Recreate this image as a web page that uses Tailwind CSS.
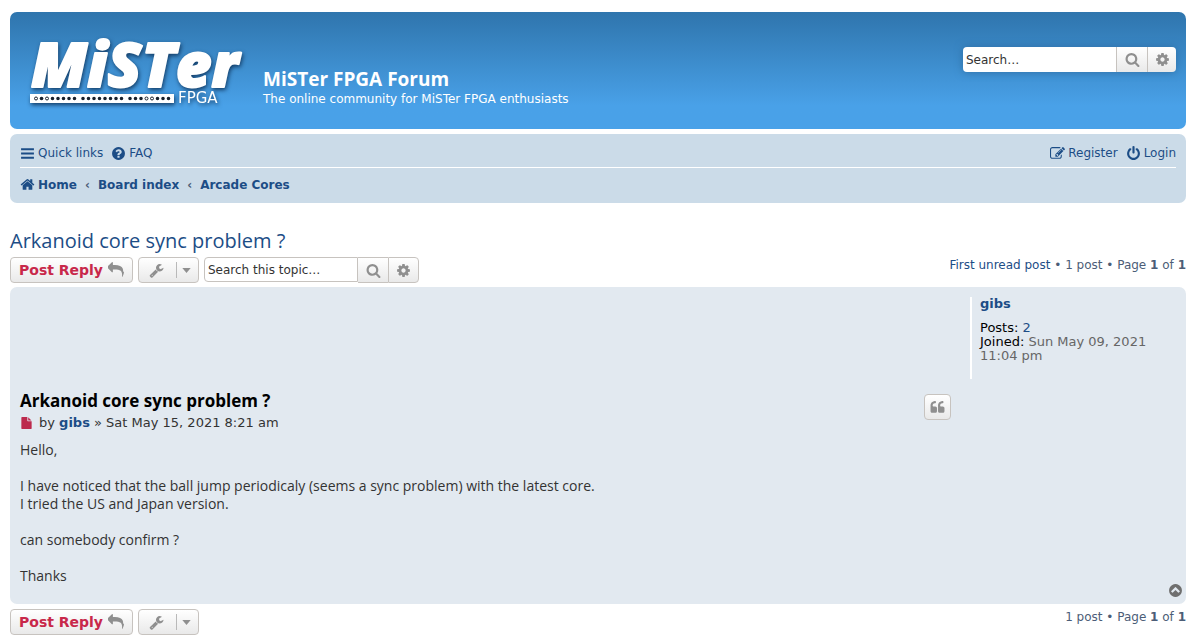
<!DOCTYPE html>
<html lang="en">
	<head>
		<meta charset="UTF-8" />
		<meta name="viewport" content="width=device-width, initial-scale=1.0" />
		<title>Arkanoid core sync problem ? - MiSTer FPGA Forum</title>
		<script src="https://cdn.jsdelivr.net/npm/@tailwindcss/browser@4"></script>
	</head>
	<body class="bg-white pt-3 pl-[10px] pr-[14px] pb-1 font-['Verdana','DejaVu_Sans',sans-serif] text-[12px] leading-4 text-[#4c5d77]">
		<!-- icon set -->
		<svg class="hidden" xmlns="http://www.w3.org/2000/svg">
			<symbol id="i-search" viewBox="0 0 1792 1792"><path d="M1216 832q0-185-131.5-316.5t-316.5-131.5-316.5 131.5-131.5 316.5 131.5 316.5 316.5 131.5 316.5-131.5 131.5-316.5zm512 832q0 52-38 90t-90 38q-54 0-90-38l-343-342q-179 124-399 124-143 0-273.5-55.5t-225-150-150-225-55.5-273.5 55.5-273.5 150-225 225-150 273.5-55.5 273.5 55.5 225 150 150 225 55.5 273.5q0 220-124 399l343 343q37 37 37 90z" /></symbol>
			<symbol id="i-cog" viewBox="0 0 1792 1792"><path d="M1152 896q0-106-75-181t-181-75-181 75-75 181 75 181 181 75 181-75 75-181zm512-109v222q0 12-8 23t-20 13l-185 28q-19 54-39 91 35 50 107 138 10 12 10 25t-9 23q-27 37-99 108t-94 71q-12 0-26-9l-138-108q-44 23-91 38-16 136-29 186-7 28-36 28h-222q-14 0-24.5-8.5t-11.5-21.5l-28-184q-49-16-90-37l-141 107q-10 9-25 9-14 0-25-11-126-114-165-168-7-10-7-23 0-12 8-23 15-21 51-66.5t54-70.5q-27-50-41-99l-183-27q-13-2-21-12.5t-8-23.5v-222q0-12 8-23t19-13l186-28q14-46 39-92-40-57-107-138-10-12-10-24 0-10 9-23 26-36 98.5-107.5t94.5-71.5q13 0 26 10l138 107q44-23 91-38 16-136 29-186 7-28 36-28h222q14 0 24.5 8.5t11.5 21.5l28 184q49 16 90 37l142-107q9-9 24-9 13 0 25 10 129 119 165 170 7 8 7 22 0 12-8 23-15 21-51 66.5t-54 70.5q26 50 41 98l183 28q13 2 21 12.5t8 23.5z" /></symbol>
			<symbol id="i-bars" viewBox="0 0 1792 1792"><path d="M128 256h1536v256H128zM128 768h1536v256H128zM128 1280h1536v256H128z" /></symbol>
			<symbol id="i-reply" viewBox="0 0 1792 1792"><path d="M1792 1120q0 166-127 451-3 7-10.5 24t-13.5 30-13 22q-12 17-28 17-15 0-23.5-10t-8.5-25q0-9 2.5-26.5t2.5-23.5q5-68 5-123 0-112-19.5-200.5t-54-153.5-89-112-120-78.5-149.5-47.5-175-23.5-199.5-6.5h-224v256q0 26-19 45t-45 19-45-19l-512-512q-19-19-19-45t19-45l512-512q19-19 45-19t45 19 19 45v256h224q713 0 875 403 53 134 53 333z" /></symbol>
			<symbol id="i-wrench" viewBox="0 0 1792 1792"><path d="M448 1472q0-26-19-45t-45-19-45 19-19 45 19 45 45 19 45-19 19-45zm644-420l-682 682q-37 37-90 37-52 0-91-37l-106-108q-38-36-38-90 0-53 38-91l681-681q39 98 114.5 173.5t173.5 114.5zm634-435q0 39-23 106-47 134-164.5 217.5t-258.5 83.5q-185 0-316.5-131.5t-131.5-316.5 131.5-316.5 316.5-131.5q58 0 121.5 16.5t107.5 46.5q16 11 16 28t-16 28l-293 169v224l193 107q5-3 79-48.5t135.5-81 70.5-35.5q15 0 23.5 10t8.5 25z" /></symbol>
			<symbol id="i-home" viewBox="0 0 1792 1792"><path d="M1472 992v480q0 26-19 45t-45 19h-384v-384h-256v384h-384q-26 0-45-19t-19-45v-480q0-1 .5-3t.5-3l575-474 575 474q1 2 1 6zm223-69l-62 74q-8 9-21 11h-3q-13 0-21-7l-692-577-692 577q-12 8-24 7-13-2-21-11l-62-74q-8-10-7-23.5t11-21.5l719-599q32-26 76-26t76 26l244 204v-195q0-14 9-23t23-9h192q14 0 23 9t9 23v408l219 182q10 8 11 21.5t-7 23.5z" /></symbol>
			<symbol id="i-question" viewBox="0 0 1792 1792"><path d="M1024 1376v-192q0-14-9-23t-23-9h-192q-14 0-23 9t-9 23v192q0 14 9 23t23 9h192q14 0 23-9t9-23zm256-672q0-88-55.5-163t-138.5-116-170-41q-243 0-371 213-15 24 8 42l132 100q7 6 19 6 16 0 25-12 53-68 86-92 34-24 86-24 48 0 85.5 26t37.5 59q0 38-20 61t-68 45q-63 28-115.5 86.5t-52.5 125.5v36q0 14 9 23t23 9h192q14 0 23-9t9-23q0-19 21.5-49.5t54.5-49.5q32-18 49-28.5t46-35 44.5-48 28-60.5 12.5-81zm384 192q0 209-103 385.5t-279.5 279.5-385.5 103-385.5-103-279.5-279.5-103-385.5 103-385.5 279.5-279.5 385.5-103 385.5 103 279.5 279.5 103 385.5z" /></symbol>
			<symbol id="i-power" viewBox="0 0 1792 1792"><path d="M1664 896q0 156-61 298t-164 245-245 164-298 61-298-61-245-164-164-245-61-298q0-182 80.5-343t226.5-270q43-32 95.5-25t83.5 50q32 42 24.5 94.5t-49.5 84.5q-98 74-151.5 181t-53.5 228q0 104 40.5 198.5t109.5 163.5 163.5 109.5 198.5 40.5 198.5-40.5 163.5-109.5 109.5-163.5 40.5-198.5q0-121-53.5-228t-151.5-181q-42-32-49.5-84.5t24.5-94.5q31-43 84-50t95 25q146 109 226.5 270t80.5 343zm-640-768v640q0 52-38 90t-90 38-90-38-38-90v-640q0-52 38-90t90-38 90 38 38 90z" /></symbol>
			<symbol id="i-edit" viewBox="0 0 1792 1792"><path d="M888 1184l116-116-152-152-116 116v56h96v96h56zm440-720q-16-16-33 1l-350 350q-17 17-1 33t33-1l350-350q17-17 1-33zm80 594v190q0 119-84.5 203.5t-203.5 84.5h-832q-119 0-203.5-84.5t-84.5-203.5v-832q0-119 84.5-203.5t203.5-84.5h832q63 0 117 25 15 7 18 23 3 17-9 29l-49 49q-14 14-32 8-23-6-45-6h-832q-66 0-113 47t-47 113v832q0 66 47 113t113 47h832q66 0 113-47t47-113v-126q0-13 9-22l64-64q15-15 35-7t20 29zm-96-738l288 288-672 672h-288v-288zm444 132l-92 92-288-288 92-92q28-28 68-28t68 28l152 152q28 28 28 68t-28 68z" /></symbol>
			<symbol id="i-quote" viewBox="0 0 1792 1792"><path d="M832 960v384q0 80-56 136t-136 56h-384q-80 0-136-56t-56-136v-704q0-104 40.5-198.5t109.5-163.5 163.5-109.5 198.5-40.5h64q26 0 45 19t19 45v128q0 26-19 45t-45 19h-64q-106 0-181 75t-75 181v32q0 40 28 68t68 28h224q80 0 136 56t56 136zm896 0v384q0 80-56 136t-136 56h-384q-80 0-136-56t-56-136v-704q0-104 40.5-198.5t109.5-163.5 163.5-109.5 198.5-40.5h64q26 0 45 19t19 45v128q0 26-19 45t-45 19h-64q-106 0-181 75t-75 181v32q0 40 28 68t68 28h224q80 0 136 56t56 136z" /></symbol>
			<symbol id="i-up" viewBox="0 0 1792 1792"><path d="M1293 1139l102-102q19-19 19-45t-19-45l-454-454q-19-19-45-19t-45 19l-454 454q-19 19-19 45t19 45l102 102q19 19 45 19t45-19l307-307 307 307q19 19 45 19t45-19zm371-243q0 209-103 385.5t-279.5 279.5-385.5 103-385.5-103-279.5-279.5-103-385.5 103-385.5 279.5-279.5 385.5-103 385.5 103 279.5 279.5 103 385.5z" /></symbol>
			<symbol id="i-file" viewBox="0 0 1792 1792"><path d="M1152 512v-472q22 14 36 28l408 408q14 14 28 36h-472zm-128 32q0 40 28 68t68 28h544v1056q0 40-28 68t-68 28h-1344q-40 0-68-28t-28-68v-1600q0-40 28-68t68-28h800v544z" /></symbol>
			<symbol id="i-caret" viewBox="0 0 10 6"><path d="M0 0h10L5 6z" /></symbol>
		</svg>

		<header class="flex h-[117px] items-start justify-between rounded-[7px] bg-linear-to-b from-[#2f75ad] to-[#49a1e8] to-80% pl-4 pr-[10px] text-white">
			<div class="flex">
				<a href="#" aria-label="MiSTer FPGA home">
					<svg class="block h-[104px] w-[237px]" viewBox="0 0 237 104" fill="#fff" style="filter: drop-shadow(1px 2px 2px #123c66)">
						<text x="5" y="75" font-family="Open Sans" font-weight="800" font-style="italic" font-size="62" stroke="#fff" stroke-width="2" stroke-linejoin="round">MiSTer</text>
						<path d="M4 82h144v9H4z" />
						<g fill="none" stroke="#17202c" stroke-width="3.6" stroke-linecap="round">
							<path d="M15.500 86.500h.1" />
							<path d="M26.500 86.500h22.500M57 86.500h39M104 86.500h11.500M131.500 86.500h11.500" stroke-dasharray="0 5.500" />
						</g>
						<g fill="#fff" stroke="#17202c" stroke-width="1">
							<circle cx="10" cy="86.500" r="1.500" />
							<circle cx="21" cy="86.500" r="1.500" />
							<circle cx="120.500" cy="86.500" r="1.500" />
							<circle cx="126" cy="86.500" r="1.500" />
						</g>
						<text x="152" y="91" font-family="DejaVu Sans" font-size="15">FPGA</text>
					</svg>
				</a>
				<div class="pt-[55px]">
					<h1 class="font-['Trebuchet_MS','Open_Sans',sans-serif] text-[19px] leading-6 font-bold">MiSTer FPGA Forum</h1>
					<p>The online community for MiSTer FPGA enthusiasts</p>
				</div>
			</div>
			<form class="mt-[35px] flex h-[25px] overflow-hidden rounded-[4px] shadow-[0_0_8px_#2f6fa5]">
				<input type="text" aria-label="Search" placeholder="Search…" class="w-[153px] bg-white px-[3px] text-black outline-none placeholder:text-[#333]" />
				<button type="button" aria-label="Search" class="flex w-[31px] items-center justify-center border-l border-[#c7c3bf] bg-linear-to-b from-white to-[#e9e9e9] text-[#8f8f8f]"><svg class="size-[15px]" fill="currentColor"><use href="#i-search" /></svg></button>
				<button type="button" aria-label="Advanced search" class="flex w-[29px] items-center justify-center border-l border-[#c7c3bf] bg-linear-to-b from-white to-[#e9e9e9] text-[#8f8f8f]"><svg class="size-[15px]" fill="currentColor"><use href="#i-cog" /></svg></button>
			</form>
		</header>

		<nav class="mt-[5px] rounded-[7px] bg-[#cbdbe8] px-[10px] pt-[3px] pb-[2px] text-[#1c4d86]">
			<div class="flex h-[31px] items-center justify-between border-b border-white pt-[2px]">
				<div class="flex gap-2">
					<a href="#" class="flex items-center gap-[3px]"><svg class="size-[15px]" fill="currentColor"><use href="#i-bars" /></svg>Quick links</a>
					<a href="#" class="flex items-center gap-[3px]"><svg class="size-[15px]" fill="currentColor"><use href="#i-question" /></svg>FAQ</a>
				</div>
				<div class="flex gap-2">
					<a href="#" class="flex items-center gap-[3px]"><svg class="size-[15px]" fill="currentColor"><use href="#i-edit" /></svg>Register</a>
					<a href="#" class="flex items-center gap-[3px]"><svg class="size-[15px]" fill="currentColor"><use href="#i-power" /></svg>Login</a>
				</div>
			</div>
			<div class="flex h-[33px] items-center gap-2 font-bold">
				<a href="#" class="flex items-center gap-[3px]"><svg class="size-[15px]" fill="currentColor"><use href="#i-home" /></svg>Home</a>
				<span class="text-[#4c5d77]">‹</span>
				<a href="#">Board index</a>
				<span class="text-[#4c5d77]">‹</span>
				<a href="#">Arcade Cores</a>
			</div>
		</nav>

		<main>
			<h2 class="mt-[26px] font-['Trebuchet_MS','Open_Sans',sans-serif] text-[20px] leading-6 text-[#1c4d86]"><a href="#">Arkanoid core sync problem ?</a></h2>
			<div class="mt-1 flex justify-between">
				<div class="flex items-start gap-[5px]">
					<a href="#" class="flex h-[26px] items-center gap-[5px] rounded-[4px] border border-[#c7c3bf] bg-linear-to-b from-white to-[#e9e9e9] px-2 text-[14px] font-bold text-[#c8284a]">Post Reply<svg class="size-4 text-[#8f8f8f]" fill="currentColor"><use href="#i-reply" /></svg></a>
					<button type="button" aria-label="Topic tools" class="flex h-[26px] items-center rounded-[4px] border border-[#c7c3bf] bg-linear-to-b from-white to-[#e9e9e9] pr-[7px] pl-[10px] text-[#8f8f8f]">
						<svg class="size-[15px]" fill="currentColor"><use href="#i-wrench" /></svg>
						<span class="ml-3 h-4 border-l border-[#b9b9b9]"></span>
						<svg class="ml-[5px] h-[5px] w-[9px]" fill="currentColor"><use href="#i-caret" /></svg>
					</button>
					<form class="flex h-[26px]">
						<input type="text" aria-label="Search this topic" placeholder="Search this topic…" class="h-[25px] w-[154px] rounded-l-[4px] border border-[#c7c3bf] bg-white px-[3px] text-black outline-none placeholder:text-[#333]" />
						<button type="button" aria-label="Search" class="flex w-[30px] items-center justify-center border-y border-[#c7c3bf] bg-linear-to-b from-white to-[#e9e9e9] text-[#8f8f8f]"><svg class="size-[15px]" fill="currentColor"><use href="#i-search" /></svg></button>
						<button type="button" aria-label="Advanced search" class="flex w-[31px] items-center justify-center rounded-r-[4px] border border-[#c7c3bf] bg-linear-to-b from-white to-[#e9e9e9] text-[#8f8f8f]"><svg class="size-[15px]" fill="currentColor"><use href="#i-cog" /></svg></button>
					</form>
				</div>
				<p><a href="#" class="text-[#1c4d86]">First unread post</a> • 1 post • Page <strong>1</strong> of <strong>1</strong></p>
			</div>

			<article class="relative mt-1 flex rounded-[7px] bg-[#e2e9f0] p-[10px] pb-[19px]">
				<div class="flex-1 pr-[19px] pt-[92px]">
					<div class="flex items-start justify-between">
						<div>
							<h3 class="font-['Trebuchet_MS','Open_Sans',sans-serif] text-[17px] leading-6 font-bold text-black"><a href="#">Arkanoid core sync problem ?</a></h3>
							<p class="mt-[2px] flex items-center text-[13px] text-[#333]"><svg class="mr-[6px] h-3 w-[13px] text-[#bc2a4d]" fill="currentColor"><use href="#i-file" /></svg><span>by <a href="#" class="font-bold text-[#1c4d86]">gibs</a> » Sat May 15, 2021 8:21 am</span></p>
						</div>
						<button type="button" aria-label="Reply with quote" class="mt-[5px] flex h-[26px] w-[27px] items-center justify-center rounded-[4px] border border-[#c7c3bf] bg-linear-to-b from-white to-[#e9e9e9] text-[#8f8f8f]"><svg class="size-[15px]" fill="currentColor"><use href="#i-quote" /></svg></button>
					</div>
					<div class="mt-[10px] space-y-[18px] font-['Lucida_Grande','Open_Sans',sans-serif] text-[14px] leading-[18px] text-[#333]">
						<p>Hello,</p>
						<p>I have noticed that the ball jump periodicaly (seems a sync problem) with the latest core.<br />I tried the US and Japan version.</p>
						<p>can somebody confirm ?</p>
						<p>Thanks</p>
					</div>
				</div>
				<aside class="h-[82px] w-[206px] border-l-2 border-white pl-2 text-[13px] leading-[14px]">
					<a href="#" class="font-bold text-[#1c4d86]">gibs</a>
					<dl class="mt-[10px] text-[#666]">
						<div><dt class="inline text-black">Posts:</dt> <dd class="inline text-[#1c4d86]"><a href="#">2</a></dd></div>
						<div><dt class="inline text-black">Joined:</dt> <dd class="inline">Sun May 09, 2021 11:04 pm</dd></div>
					</dl>
				</aside>
				<a href="#" aria-label="Top" class="absolute right-[3px] bottom-[6px] text-[#6f6f6f]"><svg class="size-[15px]" fill="currentColor"><use href="#i-up" /></svg></a>
			</article>

			<div class="mt-[5px] flex justify-between">
				<div class="flex gap-[5px]">
					<a href="#" class="flex h-[26px] items-center gap-[5px] rounded-[4px] border border-[#c7c3bf] bg-linear-to-b from-white to-[#e9e9e9] px-2 text-[14px] font-bold text-[#c8284a]">Post Reply<svg class="size-4 text-[#8f8f8f]" fill="currentColor"><use href="#i-reply" /></svg></a>
					<button type="button" aria-label="Topic tools" class="flex h-[26px] items-center rounded-[4px] border border-[#c7c3bf] bg-linear-to-b from-white to-[#e9e9e9] pr-[7px] pl-[10px] text-[#8f8f8f]">
						<svg class="size-[15px]" fill="currentColor"><use href="#i-wrench" /></svg>
						<span class="ml-3 h-4 border-l border-[#b9b9b9]"></span>
						<svg class="ml-[5px] h-[5px] w-[9px]" fill="currentColor"><use href="#i-caret" /></svg>
					</button>
				</div>
				<p>1 post • Page <strong>1</strong> of <strong>1</strong></p>
			</div>
		</main>
	</body>
</html>
